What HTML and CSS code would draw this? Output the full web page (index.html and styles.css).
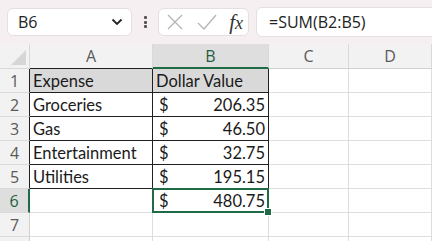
FILE: index.html
```html
<!DOCTYPE html>
<html lang="en">
<head>
    <meta charset="UTF-8">
    <title>Expenses</title>
    <link rel="stylesheet" href="styles.css">
</head>
<body>

    <div class="top-bar">
        <div class="name-box">
            <span>B6</span>
            <svg class="chevron" width="12" height="8" viewBox="0 0 12 8"><path d="M1.5 1.5 L6 6 L10.5 1.5" fill="none" stroke="#222" stroke-width="1.8"/></svg>
        </div>
        <div class="dots">
            <span></span>
            <span></span>
            <span></span>
        </div>
        <div class="fx-box">
            <svg width="18" height="18" viewBox="0 0 18 18"><path d="M2 2 L16 16 M16 2 L2 16" stroke="#b4b4b4" stroke-width="1.3" fill="none"/></svg>
            <svg width="22" height="18" viewBox="0 0 22 18"><path d="M2 10 L8 16 L20 2" stroke="#b4b4b4" stroke-width="1.3" fill="none"/></svg>
            <span class="fx"><i>f</i><i>x</i></span>
        </div>
        <div class="formula">=SUM(B2:B5)</div>
    </div>

    <div class="sheet">
        <div class="corner"><div class="tri"></div></div>
        <div class="col-head">A</div>
        <div class="col-head sel">B</div>
        <div class="col-head">C</div>
        <div class="col-head">D</div>

        <div class="row-head edge">1</div>
        <div class="cell boxed head-fill">Expense</div>
        <div class="cell boxed head-fill">Dollar Value</div>
        <div class="cell"></div>
        <div class="cell"></div>

        <div class="row-head edge">2</div>
        <div class="cell boxed">Groceries</div>
        <div class="cell boxed money"><span>$</span><span>206.35</span></div>
        <div class="cell"></div>
        <div class="cell"></div>

        <div class="row-head edge">3</div>
        <div class="cell boxed">Gas</div>
        <div class="cell boxed money"><span>$</span><span>46.50</span></div>
        <div class="cell"></div>
        <div class="cell"></div>

        <div class="row-head edge">4</div>
        <div class="cell boxed">Entertainment</div>
        <div class="cell boxed money"><span>$</span><span>32.75</span></div>
        <div class="cell"></div>
        <div class="cell"></div>

        <div class="row-head edge">5</div>
        <div class="cell boxed">Utilities</div>
        <div class="cell boxed money"><span>$</span><span>195.15</span></div>
        <div class="cell"></div>
        <div class="cell"></div>

        <div class="row-head sel">6</div>
        <div class="cell"></div>
        <div class="cell money active"><span>$</span><span>480.75</span><div class="handle"></div></div>
        <div class="cell"></div>
        <div class="cell"></div>

        <div class="row-head">7</div>
        <div class="cell"></div>
        <div class="cell"></div>
        <div class="cell"></div>
        <div class="cell"></div>

        <div class="row-head"></div>
        <div class="cell"></div>
        <div class="cell"></div>
        <div class="cell"></div>
        <div class="cell"></div>
    </div>

</body>
</html>
```

FILE: styles.css
```css
body {
    margin: 0;
    width: 432px;
    height: 241px;
    overflow: hidden;
    background-color: white;
    font-family: "Open Sans", "Noto Sans", sans-serif;
}

.top-bar {
    display: flex;
    align-items: center;
    height: 44px;
    padding: 0 0 0 7px;
    box-sizing: border-box;
    background-color: #f6eff2;
    overflow: hidden;
}

.name-box {
    display: flex;
    align-items: center;
    justify-content: space-between;
    width: 125px;
    height: 28px;
    padding: 0 8px 0 10px;
    box-sizing: border-box;
    background-color: white;
    border: 1px solid #e6dfe2;
    border-radius: 6px;
    font-size: 16px;
    color: #222;
}

.dots {
    display: flex;
    flex-direction: column;
    justify-content: space-between;
    align-items: center;
    width: 26px;
    height: 12px;
}

.dots span {
    width: 3px;
    height: 3px;
    background-color: #555;
    border-radius: 1px;
}

.fx-box {
    display: flex;
    align-items: center;
    justify-content: space-between;
    width: 91px;
    height: 28px;
    padding: 0 5px 0 7px;
    box-sizing: border-box;
    background-color: white;
    border: 1px solid #e6dfe2;
    border-radius: 6px;
}

.fx {
    font-family: "Liberation Serif", serif;
    font-size: 21px;
    color: #333;
}

.fx i:last-child {
    font-size: 18px;
}

.formula {
    flex-grow: 1;
    height: 28px;
    margin-left: 7px;
    margin-right: -8px;
    padding-left: 12px;
    display: flex;
    align-items: center;
    background-color: white;
    border: 1px solid #e6dfe2;
    border-radius: 6px;
    font-size: 16px;
    color: #222;
}

.sheet {
    display: grid;
    grid-template-columns: 30px 123px 116px 80px 83px;
    grid-template-rows: 25px repeat(7, 24px) 10px;
    font-family: Lato, "Liberation Sans", sans-serif;
    font-size: 16.5px;
    color: #1a1a1a;
}

.corner {
    background-color: #f2f2f2;
    border-right: 1px solid #d9d9d9;
    border-bottom: 1px solid #d9d9d9;
    box-sizing: border-box;
    position: relative;
}

.tri {
    position: absolute;
    right: 3px;
    bottom: 3px;
    width: 0;
    height: 0;
    border-left: 15px solid transparent;
    border-bottom: 15px solid #d6d6d6;
}

.col-head {
    display: flex;
    align-items: center;
    justify-content: center;
    background-color: #f2f2f2;
    border-right: 1px solid #d9d9d9;
    border-bottom: 1px solid #202020;
    box-sizing: border-box;
    font-family: "Open Sans", "Noto Sans", sans-serif;
    font-size: 16px;
    color: #5a5a5a;
}

.col-head:nth-child(4),
.col-head:nth-child(5) {
    border-bottom-color: #d0d0d0;
}

.col-head.sel {
    background-color: #dedede;
    border-bottom: 2px solid #1e6b45;
    color: #1e5e3e;
}

.row-head {
    display: flex;
    align-items: center;
    justify-content: center;
    background-color: #f2f2f2;
    border-right: 1px solid #d0d0d0;
    border-bottom: 1px solid #dadada;
    box-sizing: border-box;
    font-family: "Open Sans", "Noto Sans", sans-serif;
    font-size: 16px;
    color: #5a5a5a;
}

.row-head.edge {
    border-right-color: #202020;
}

.row-head.sel {
    background-color: #dedede;
    border-right: 2px solid #1e6b45;
    color: #1e5e3e;
}

.cell {
    display: flex;
    align-items: center;
    padding: 1px 3px 0 3px;
    border-right: 1px solid #dedede;
    border-bottom: 1px solid #dedede;
    box-sizing: border-box;
    white-space: nowrap;
    position: relative;
}

.cell.boxed {
    border-right-color: #202020;
    border-bottom-color: #202020;
}

.head-fill {
    background-color: #d9d9d9;
}

.money {
    justify-content: space-between;
    padding-left: 6px;
}

.active::after {
    content: "";
    position: absolute;
    left: -1px;
    top: -1px;
    right: -1px;
    bottom: -1px;
    border: 2px solid #1e6b45;
}

.handle {
    position: absolute;
    right: -4px;
    bottom: -4px;
    width: 6px;
    height: 6px;
    background-color: #1e6b45;
    border: 1px solid white;
    z-index: 2;
}
```
